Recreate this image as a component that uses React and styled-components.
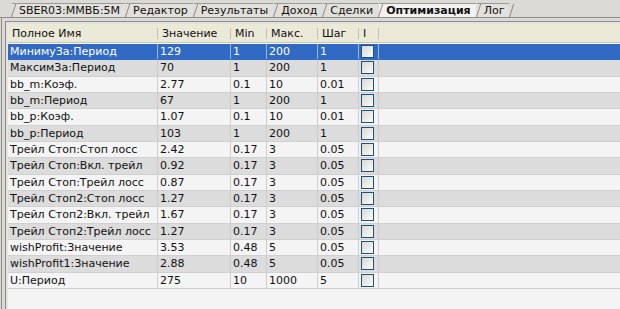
import React from 'react'
import styled, { createGlobalStyle } from 'styled-components'

const GlobalStyle = createGlobalStyle`
  html, body {
    margin: 0;
    padding: 0;
  }
  body {
    background: #dcdad5;
    font-family: "DejaVu Sans", Verdana, sans-serif;
    font-size: 11px;
  }
`

const COLS = '150px 73px 36px 51px 41px 20px 1fr'

const Window = styled.div`
  width: 620px;
  height: 309px;
  overflow: hidden;
  background: #dcdad5;
  display: flex;
  flex-direction: column;
`

const TabBar = styled.div`
  display: flex;
  align-items: flex-end;
  height: 17px;
  padding-left: 11px;
  border-bottom: 1px solid #8d8d8d;
`

const Sep = styled.span`
  display: block;
  width: 1px;
  height: 13px;
  background: #8a8a8a;
  transform: skewX(-18deg);
  transform-origin: bottom;
`

const Tab = styled.div`
  display: flex;
  align-items: center;
  height: 13px;
  padding: 0 5px 0 7px;
  border-top: 1px solid #9a9a9a;
  background: ${p => (p.$active ? '#f2f1ee' : '#e2e0db')};
  color: #111;
  font-weight: ${p => (p.$active ? 'bold' : 'normal')};
  white-space: nowrap;
`

const Body = styled.div`
  flex: 1;
  display: flex;
  margin-left: 1px;
  border-left: 1px solid #8d8d8d;
  padding: 3px 0 0 3px;
`

const Panel = styled.div`
  flex: 1;
  display: flex;
  border-top: 1px solid #8d8d8d;
  border-left: 1px solid #8d8d8d;
  padding: 2px 0 0 2px;
  background: #e4e2dd;
`

const Table = styled.div`
  flex: 1;
  background: #f4f4f4;
`

const Header = styled.div`
  display: grid;
  grid-template-columns: ${COLS};
  height: 19px;
  box-sizing: border-box;
  background: #ebe9d8;
  border-bottom: 1px solid #cac6b5;
  box-shadow: 0 1px 0 #f7f6f1;
  margin-bottom: 1px;
`

const HeadCell = styled.div`
  display: flex;
  align-items: center;
  padding-left: 4px;
  color: #111;
  white-space: nowrap;
  overflow: hidden;
  background: ${p =>
    p.$last ? 'none' : 'linear-gradient(#c4c1b0, #c4c1b0) right 4px / 1px 11px no-repeat'};
`

const Row = styled.div`
  display: grid;
  grid-template-columns: ${COLS};
  height: 16.33px;
  box-sizing: border-box;
  border-bottom: 1px solid ${p => (p.$selected ? '#316ac5' : '#d0d0d0')};
  background: ${p => (p.$selected ? '#316ac5' : p.$alt ? '#dcdcdc' : '#f4f4f4')};
  color: ${p => (p.$selected ? '#ffffff' : '#111111')};
`

const Cell = styled.div`
  display: flex;
  align-items: center;
  padding-left: 2px;
  white-space: nowrap;
  overflow: hidden;
  border-right: ${p => (p.$last ? 'none' : p.$selected ? '1px solid #9db4de' : '1px solid #cdcdcd')};
`

const Check = styled.span`
  display: block;
  width: 13px;
  height: 13px;
  box-sizing: border-box;
  border: 1px solid #1c5180;
  background: linear-gradient(135deg, #d8d8d3, #fbfbf9);
`

const tabs = ['SBER03:MMBБ:5M', 'Редактор', 'Результаты', 'Доход', 'Сделки', 'Оптимизация', 'Лог']

const headers = ['Полное Имя', 'Значение', 'Min', 'Макс.', 'Шаг', 'I', '']

const rows = [
  ['МинимуЗа:Период', '129', '1', '200', '1'],
  ['МаксимЗа:Период', '70', '1', '200', '1'],
  ['bb_m:Коэф.', '2.77', '0.1', '10', '0.01'],
  ['bb_m:Период', '67', '1', '200', '1'],
  ['bb_p:Коэф.', '1.07', '0.1', '10', '0.01'],
  ['bb_p:Период', '103', '1', '200', '1'],
  ['Трейл Стоп:Стоп лосс', '2.42', '0.17', '3', '0.05'],
  ['Трейл Стоп:Вкл. трейл', '0.92', '0.17', '3', '0.05'],
  ['Трейл Стоп:Трейл лосс', '0.87', '0.17', '3', '0.05'],
  ['Трейл Стоп2:Стоп лосс', '1.27', '0.17', '3', '0.05'],
  ['Трейл Стоп2:Вкл. трейл', '1.67', '0.17', '3', '0.05'],
  ['Трейл Стоп2:Трейл лосс', '1.27', '0.17', '3', '0.05'],
  ['wishProfit:Значение', '3.53', '0.48', '5', '0.05'],
  ['wishProfit1:Значение', '2.88', '0.48', '5', '0.05'],
  ['U:Период', '275', '10', '1000', '5'],
]

export default function App() {
  return (
    <Window>
      <GlobalStyle />
      <TabBar>
        <Sep />
        {tabs.map(t => (
          <React.Fragment key={t}>
            <Tab $active={t === 'Оптимизация'}>{t}</Tab>
            <Sep />
          </React.Fragment>
        ))}
      </TabBar>
      <Body>
        <Panel>
          <Table>
            <Header>
              {headers.map((h, i) => (
                <HeadCell key={i} $last={i === headers.length - 1}>{h}</HeadCell>
              ))}
            </Header>
            {rows.map((r, i) => {
              const sel = i === 0
              return (
                <Row key={i} $selected={sel} $alt={i % 2 === 1}>
                  {r.map((v, j) => (
                    <Cell key={j} $selected={sel}>{v}</Cell>
                  ))}
                  <Cell $selected={sel}><Check /></Cell>
                  <Cell $last />
                </Row>
              )
            })}
          </Table>
        </Panel>
      </Body>
    </Window>
  )
}
